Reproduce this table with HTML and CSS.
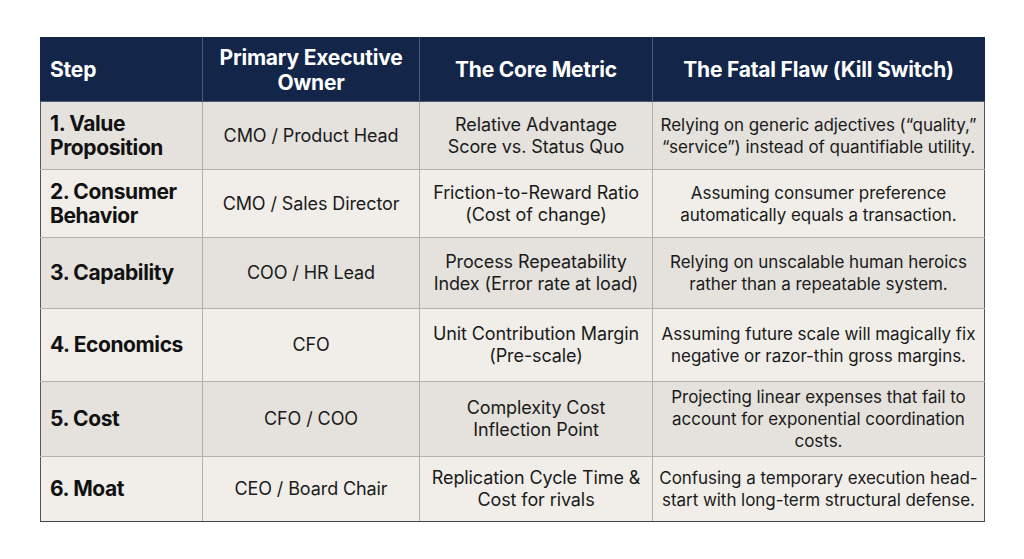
FILE: index.html
```html
<!DOCTYPE html>
<html>
<head>
<meta charset="utf-8">
<link rel="stylesheet" href="styles.css">
</head>
<body>
<div class="wrap">
<table class="grid">
<colgroup>
<col class="c1"><col class="c2"><col class="c3"><col class="c4">
</colgroup>
<thead>
<tr class="hd">
<th class="step">Step</th>
<th>Primary Executive Owner</th>
<th>The Core Metric</th>
<th>The Fatal Flaw (Kill Switch)</th>
</tr>
</thead>
<tbody>
<tr class="r1 dark">
<td class="step">1. Value Proposition</td>
<td>CMO / Product Head</td>
<td class="metric">Relative Advantage<br>Score vs. Status Quo</td>
<td class="flaw">Relying on generic adjectives (“quality,”<br>“service”) instead of quantifiable utility.</td>
</tr>
<tr class="r2 light">
<td class="step">2. Consumer Behavior</td>
<td>CMO / Sales Director</td>
<td class="metric">Friction-to-Reward Ratio<br>(Cost of change)</td>
<td class="flaw">Assuming consumer preference<br>automatically equals a transaction.</td>
</tr>
<tr class="r3 dark">
<td class="step">3. Capability</td>
<td>COO / HR Lead</td>
<td class="metric">Process Repeatability<br>Index (Error rate at load)</td>
<td class="flaw">Relying on unscalable human heroics<br>rather than a repeatable system.</td>
</tr>
<tr class="r4 light">
<td class="step">4. Economics</td>
<td>CFO</td>
<td class="metric">Unit Contribution Margin<br>(Pre-scale)</td>
<td class="flaw">Assuming future scale will magically fix<br>negative or razor-thin gross margins.</td>
</tr>
<tr class="r5 dark">
<td class="step">5. Cost</td>
<td>CFO / COO</td>
<td class="metric">Complexity Cost<br>Inflection Point</td>
<td class="flaw">Projecting linear expenses that fail to<br>account for exponential coordination<br>costs.</td>
</tr>
<tr class="r6 light">
<td class="step">6. Moat</td>
<td>CEO / Board Chair</td>
<td class="metric">Replication Cycle Time &amp;<br>Cost for rivals</td>
<td class="flaw">Confusing a temporary execution head-<br>start with long-term structural defense.</td>
</tr>
</tbody>
</table>
</div>
</body>
</html>
```
FILE: styles.css
```css
html, body {
  margin: 0;
  padding: 0;
  background: #ffffff;
}
.wrap {
  padding: 37px 0 0 40px;
}
.grid {
  border-collapse: collapse;
  table-layout: fixed;
  width: 944px;
  font-family: Inter, "Noto Sans", sans-serif;
  color: #1a1a1a;
}
.c1 { width: 162px; }
.c2 { width: 217px; }
.c3 { width: 233px; }
.c4 { width: 332px; }
th, td {
  border: 1px solid #b4b1ab;
  text-align: center;
  vertical-align: middle;
  padding: 0 4px;
}
.hd {
  height: 64px;
  background: #13264a;
}
th {
  color: #ffffff;
  font-weight: 700;
  font-size: 21px;
  line-height: 25px;
  letter-spacing: -0.2px;
  border-color: #4a5873;
  border-top-color: #13264a;
}
th:first-child { border-left-color: #13264a; }
th:last-child { border-right-color: #13264a; }
th.step, td.step {
  text-align: left;
  padding-left: 9px;
}
td {
  font-size: 18px;
  line-height: 22px;
  letter-spacing: -0.1px;
}
td.flaw {
  font-size: 17px;
  letter-spacing: -0.05px;
}
td.step {
  font-weight: 700;
  font-size: 21px;
  line-height: 24px;
  letter-spacing: -0.4px;
  color: #111111;
}
td:first-child { border-left-color: #555555; }
td:last-child { border-right-color: #555555; }
tbody tr:last-child td { border-bottom-color: #444444; }
.dark { background: #e5e2dd; }
.light { background: #f1eee9; }
.r1 { height: 68px; }
.r2 { height: 68px; }
.r3 { height: 71px; }
.r4 { height: 73px; }
.r5 { height: 75px; }
.r6 { height: 65px; }
```
